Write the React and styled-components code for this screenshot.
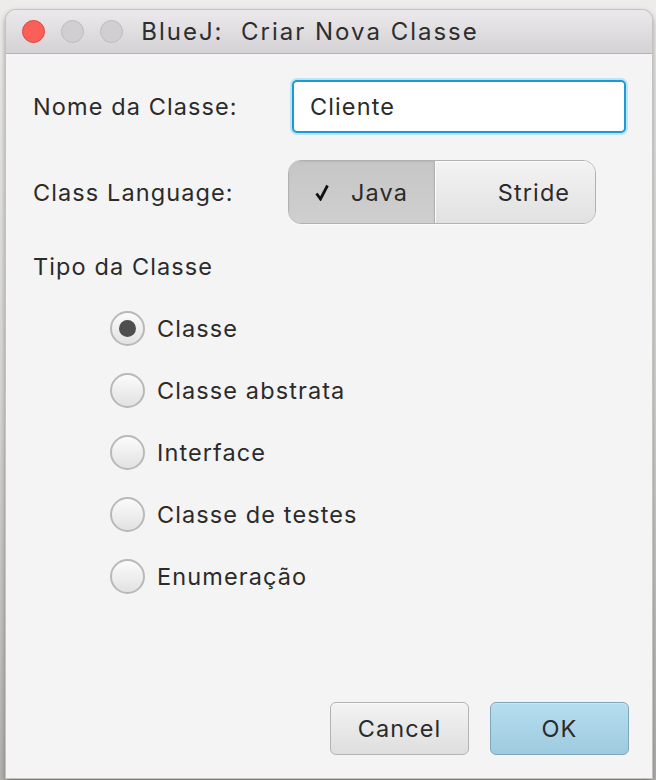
import React, { useState } from 'react';
import styled, { createGlobalStyle } from 'styled-components';

const GlobalStyle = createGlobalStyle`
    html, body {
        margin: 0;
        padding: 0;
        background: #eceae7;
    }
    body {
        font-family: Inter, "Liberation Sans", Arial, sans-serif;
        color: #2b2b2b;
        letter-spacing: 1.1px;
    }
`;

const Desktop = styled.div`
    width: 656px;
    height: 780px;
    padding: 10px 4px 0 6px;
    box-sizing: border-box;
    overflow: hidden;
    background: linear-gradient(to bottom, #edecea 0%, #d9d7d3 50%, #b4b2ad 100%);
`;

const Window = styled.div`
    width: 646px;
    height: 768px;
    display: flex;
    flex-direction: column;
    background: #f4f4f4;
    border-radius: 10px 10px 0 0;
    box-shadow: 0 0 0 1px #c4c3c2, 0 3px 6px rgba(0, 0, 0, 0.45);
    overflow: hidden;
`;

const TitleBar = styled.div`
    height: 43px;
    flex: none;
    display: flex;
    align-items: center;
    position: relative;
    background: linear-gradient(to bottom, #ebe9eb, #d4d2d4);
    border-bottom: 1px solid #b4b4b4;
`;

const Lights = styled.div`
    display: flex;
    gap: 16px;
    padding-left: 16px;
`;

const Light = styled.span`
    width: 23px;
    height: 23px;
    border-radius: 50%;
    box-sizing: border-box;
    background: ${p => p.$red ? '#fc5f57' : '#d1d0d1'};
    border: 1px solid ${p => p.$red ? '#df4744' : '#bcbbbc'};
`;

const Title = styled.div`
    position: absolute;
    left: 0;
    right: 38px;
    text-align: center;
    font-size: 24px;
    letter-spacing: 2px;
    color: #2e2e2e;
    pointer-events: none;
    white-space: pre;
`;

const Body = styled.div`
    flex: 1;
    display: flex;
    flex-direction: column;
    padding: 26px 23px 23px 27px;
`;

const Form = styled.div`
    display: grid;
    grid-template-columns: 255px auto;
    row-gap: 27px;
    align-items: center;
`;

const Label = styled.div`
    font-size: 23.5px;
`;

const TextField = styled.input`
    width: 334px;
    height: 53px;
    margin-left: 4px;
    box-sizing: border-box;
    border: 2px solid #1a9ad6;
    border-radius: 5px;
    box-shadow: 0 0 0 2px #bfe3f3;
    background: #fff;
    padding: 0 16px;
    font-family: inherit;
    font-size: 23.5px;
    letter-spacing: inherit;
    color: #2b2b2b;
    outline: none;
`;

const Toggle = styled.div`
    display: flex;
    width: 308px;
    height: 64px;
    box-sizing: border-box;
    border: 1px solid #b1b1b1;
    border-radius: 13px;
    overflow: hidden;
    box-shadow: 0 1px 0 #fafafa;
`;

const Segment = styled.button`
    flex: 0 0 ${p => p.$width}px;
    display: flex;
    align-items: center;
    justify-content: center;
    gap: 22px;
    border: none;
    padding: 0 0 0 ${p => p.$indent || 0}px;
    margin: 0;
    font-family: inherit;
    font-size: 23.5px;
    letter-spacing: inherit;
    color: #2b2b2b;
    background: ${p => p.$on
        ? 'linear-gradient(to bottom, #c6c6c6, #cfcfcf)'
        : 'linear-gradient(to bottom, #f3f3f3, #e1e1e1)'};
    box-shadow: ${p => p.$on ? 'inset 0 1px 2px rgba(0,0,0,0.08)' : 'inset 1px 1px 0 #fbfbfb'};
    & + & {
        border-left: 1px solid #b1b1b1;
    }
`;

const Section = styled.div`
    font-size: 23.5px;
    margin-top: 28px;
`;

const RadioList = styled.div`
    display: flex;
    flex-direction: column;
    gap: 27px;
    margin-top: 30px;
    padding-left: 77px;
`;

const RadioRow = styled.label`
    display: flex;
    align-items: center;
    gap: 12px;
    font-size: 23.5px;
    height: 35px;
    cursor: default;
`;

const RadioDot = styled.span`
    width: 35px;
    height: 35px;
    box-sizing: border-box;
    border-radius: 50%;
    border: 2px solid #b9b9b9;
    background: linear-gradient(to bottom, #fbfbfb, #e2e2e2);
    display: flex;
    align-items: center;
    justify-content: center;
    &::after {
        content: '';
        width: 17px;
        height: 17px;
        border-radius: 50%;
        background: #4e4e4e;
        display: ${p => p.$on ? 'block' : 'none'};
    }
`;

const Footer = styled.div`
    margin-top: auto;
    display: flex;
    justify-content: flex-end;
    gap: 21px;
`;

const Button = styled.button`
    width: 139px;
    height: 53px;
    box-sizing: border-box;
    border-radius: 6px;
    font-family: inherit;
    font-size: 23.5px;
    letter-spacing: inherit;
    color: #2b2b2b;
    border: 1px solid ${p => p.$primary ? '#7ea7bb' : '#b3b3b3'};
    background: ${p => p.$primary
        ? 'linear-gradient(to bottom, #b6def0, #9ecadf)'
        : 'linear-gradient(to bottom, #f3f3f3, #dedede)'};
    box-shadow: inset 0 1px 0 ${p => p.$primary ? '#c9e8f6' : '#fafafa'};
`;

const types = ['Classe', 'Classe abstrata', 'Interface', 'Classe de testes', 'Enumeração'];

const App = () => {
    const [lang, setLang] = useState('Java');
    const [kind, setKind] = useState('Classe');

    return (
        <>
            <GlobalStyle />
            <Desktop>
                <Window>
                    <TitleBar>
                        <Lights>
                            <Light $red />
                            <Light />
                            <Light />
                        </Lights>
                        <Title>BlueJ:  Criar Nova Classe</Title>
                    </TitleBar>
                    <Body>
                        <Form>
                            <Label>Nome da Classe:</Label>
                            <TextField defaultValue="Cliente" />
                            <Label>Class Language:</Label>
                            <Toggle>
                                <Segment $width={145} $on={lang === 'Java'} onClick={() => setLang('Java')}>
                                    {lang === 'Java' && (
                                        <svg width="14" height="17" viewBox="0 0 14 17">
                                            <path d="M1.5 9.5 L5.5 15 L12.5 1.5" fill="none" stroke="#111" strokeWidth="2.8" />
                                        </svg>
                                    )}
                                    Java
                                </Segment>
                                <Segment $width={163} $indent={36} $on={lang === 'Stride'} onClick={() => setLang('Stride')}>
                                    Stride
                                </Segment>
                            </Toggle>
                        </Form>
                        <Section>Tipo da Classe</Section>
                        <RadioList>
                            {types.map(t => (
                                <RadioRow key={t} onClick={() => setKind(t)}>
                                    <RadioDot $on={kind === t} />
                                    {t}
                                </RadioRow>
                            ))}
                        </RadioList>
                        <Footer>
                            <Button>Cancel</Button>
                            <Button $primary>OK</Button>
                        </Footer>
                    </Body>
                </Window>
            </Desktop>
        </>
    );
};

export default App;
